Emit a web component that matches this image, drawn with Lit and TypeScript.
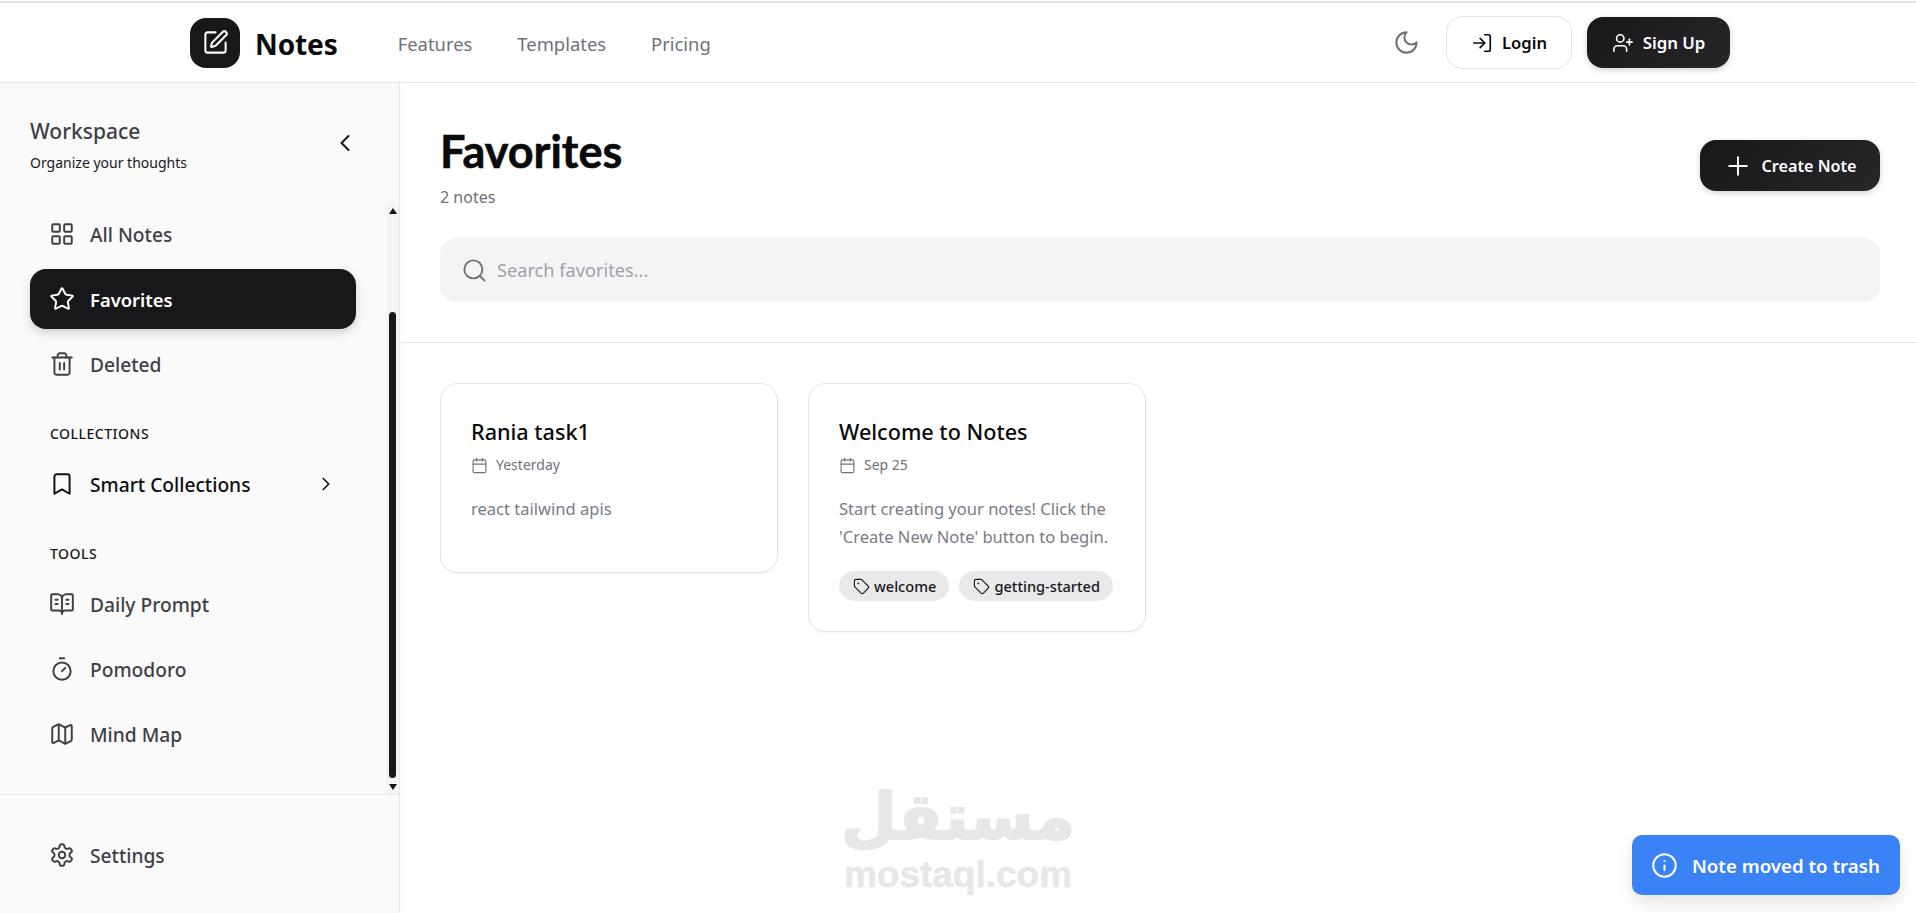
import { LitElement, html, css, svg } from "lit";
import { customElement } from "lit/decorators.js";

const I: Record<string, any> = {
  pen: svg`<path d="M12 3H5a2 2 0 0 0-2 2v14a2 2 0 0 0 2 2h14a2 2 0 0 0 2-2v-7"/><path d="M18.375 2.625a1 1 0 0 1 3 3l-9.013 9.014a2 2 0 0 1-.853.505l-2.873.84a.5.5 0 0 1-.62-.62l.84-2.873a2 2 0 0 1 .506-.852z"/>`,
  moon: svg`<path d="M12 3a6 6 0 0 0 9 9 9 9 0 1 1-9-9Z"/>`,
  login: svg`<path d="M15 3h4a2 2 0 0 1 2 2v14a2 2 0 0 1-2 2h-4"/><polyline points="10 17 15 12 10 7"/><line x1="15" y1="12" x2="3" y2="12"/>`,
  userplus: svg`<path d="M16 21v-2a4 4 0 0 0-4-4H6a4 4 0 0 0-4 4v2"/><circle cx="9" cy="7" r="4"/><line x1="19" y1="8" x2="19" y2="14"/><line x1="22" y1="11" x2="16" y2="11"/>`,
  plus: svg`<path d="M5 12h14"/><path d="M12 5v14"/>`,
  grid: svg`<rect x="3" y="3" width="7" height="7" rx="1"/><rect x="14" y="3" width="7" height="7" rx="1"/><rect x="14" y="14" width="7" height="7" rx="1"/><rect x="3" y="14" width="7" height="7" rx="1"/>`,
  star: svg`<path d="M11.525 2.295a.53.53 0 0 1 .95 0l2.31 4.679a2.123 2.123 0 0 0 1.595 1.16l5.166.756a.53.53 0 0 1 .294.904l-3.736 3.638a2.123 2.123 0 0 0-.611 1.878l.882 5.14a.53.53 0 0 1-.771.56l-4.618-2.428a2.122 2.122 0 0 0-1.973 0L6.396 21.01a.53.53 0 0 1-.77-.56l.881-5.139a2.122 2.122 0 0 0-.611-1.879L2.16 9.795a.53.53 0 0 1 .294-.906l5.165-.755a2.122 2.122 0 0 0 1.597-1.16z"/>`,
  trash: svg`<path d="M3 6h18"/><path d="M19 6v14c0 1-1 2-2 2H7c-1 0-2-1-2-2V6"/><path d="M8 6V4c0-1 1-2 2-2h4c1 0 2 1 2 2v2"/><line x1="10" y1="11" x2="10" y2="17"/><line x1="14" y1="11" x2="14" y2="17"/>`,
  bookmark: svg`<path d="m19 21-7-4-7 4V5a2 2 0 0 1 2-2h10a2 2 0 0 1 2 2v16z"/>`,
  right: svg`<path d="m9 18 6-6-6-6"/>`,
  left: svg`<path d="m15 18-6-6 6-6"/>`,
  book: svg`<path d="M12 7v14"/><path d="M16 12h2"/><path d="M16 8h2"/><path d="M3 18a1 1 0 0 1-1-1V4a1 1 0 0 1 1-1h5a4 4 0 0 1 4 4 4 4 0 0 1 4-4h5a1 1 0 0 1 1 1v13a1 1 0 0 1-1 1h-6a3 3 0 0 0-3 3 3 3 0 0 0-3-3z"/><path d="M6 12h2"/><path d="M6 8h2"/>`,
  timer: svg`<line x1="10" y1="2" x2="14" y2="2"/><line x1="12" y1="14" x2="15" y2="11"/><circle cx="12" cy="14" r="8"/>`,
  map: svg`<path d="M14.106 5.553a2 2 0 0 0 1.788 0l3.659-1.83A1 1 0 0 1 21 4.619v12.764a1 1 0 0 1-.553.894l-4.553 2.277a2 2 0 0 1-1.788 0l-4.212-2.106a2 2 0 0 0-1.788 0l-3.659 1.83A1 1 0 0 1 3 19.381V6.618a1 1 0 0 1 .553-.894l4.553-2.277a2 2 0 0 1 1.788 0z"/><path d="M15 5.764v15"/><path d="M9 3.236v15"/>`,
  gear: svg`<path d="M12.22 2h-.44a2 2 0 0 0-2 2v.18a2 2 0 0 1-1 1.73l-.43.25a2 2 0 0 1-2 0l-.15-.08a2 2 0 0 0-2.73.73l-.22.38a2 2 0 0 0 .73 2.73l.15.1a2 2 0 0 1 1 1.72v.51a2 2 0 0 1-1 1.74l-.15.09a2 2 0 0 0-.73 2.73l.22.38a2 2 0 0 0 2.73.73l.15-.08a2 2 0 0 1 2 0l.43.25a2 2 0 0 1 1 1.73V20a2 2 0 0 0 2 2h.44a2 2 0 0 0 2-2v-.18a2 2 0 0 1 1-1.73l.43-.25a2 2 0 0 1 2 0l.15.08a2 2 0 0 0 2.73-.73l.22-.39a2 2 0 0 0-.73-2.73l-.15-.08a2 2 0 0 1-1-1.74v-.5a2 2 0 0 1 1-1.74l.15-.09a2 2 0 0 0 .73-2.73l-.22-.38a2 2 0 0 0-2.73-.73l-.15.08a2 2 0 0 1-2 0l-.43-.25a2 2 0 0 1-1-1.73V4a2 2 0 0 0-2-2z"/><circle cx="12" cy="12" r="3"/>`,
  search: svg`<circle cx="11" cy="11" r="8"/><path d="m21 21-4.3-4.3"/>`,
  cal: svg`<path d="M8 2v4"/><path d="M16 2v4"/><rect x="3" y="4" width="18" height="18" rx="2"/><path d="M3 10h18"/>`,
  tag: svg`<path d="M12.586 2.586A2 2 0 0 0 11.172 2H4a2 2 0 0 0-2 2v7.172a2 2 0 0 0 .586 1.414l8.704 8.704a2.426 2.426 0 0 0 3.42 0l6.58-6.58a2.426 2.426 0 0 0 0-3.42z"/><circle cx="7.5" cy="7.5" r=".5" fill="currentColor"/>`,
  info: svg`<circle cx="12" cy="12" r="10"/><path d="M12 16v-4"/><path d="M12 8h.01"/>`,
};

const icon = (n: string, size = 26, sw = 1.8) => html`<svg class="ic" width=${size} height=${size} viewBox="0 0 24 24" fill="none" stroke="currentColor" stroke-width=${sw} stroke-linecap="round" stroke-linejoin="round">${I[n]}</svg>`;

@customElement("app-root")
export class AppRoot extends LitElement {
  static styles = css`
    :host { display: block; width: 1916px; height: 913px; overflow: hidden; position: relative; background: #fff; color: #0a0a0a; font-family: "Noto Sans", "Open Sans", sans-serif; }
    * { box-sizing: border-box; }
    .ic { flex: none; display: block; }
    .strip { height: 3px; border-top: 1px solid #fff; background: #e2e2e2; }
    header { height: 80px; border-bottom: 1px solid #e4e4e7; display: flex; align-items: center; padding: 0 186px 0 190px; }
    .logo { width: 50px; height: 50px; border-radius: 16px; background: #18181b; color: #fff; display: flex; align-items: center; justify-content: center; }
    .brand { font-size: 28px; font-weight: 700; margin-left: 15px; letter-spacing: -0.1px; padding-top: 2px; }
    nav.top { display: flex; gap: 45px; margin-left: 60px; font-size: 18.4px; color: #71717a; padding-top: 2px; }
    .spacer { flex: 1; }
    .moon { color: #71717a; margin-right: 26px; }
    .btn { display: flex; align-items: center; justify-content: center; font-weight: 600; }
    .login { width: 126px; height: 53px; border: 1px solid #e4e4e7; border-radius: 16px; gap: 9px; font-size: 16.6px; background: #fff; }
    .signup { width: 143px; height: 51px; border-radius: 16px; gap: 9px; font-size: 16.8px; color: #fff; background: linear-gradient(135deg, #18181b, #27272a); margin-left: 15px; box-shadow: 0 2px 6px rgba(0,0,0,.18); }
    .body { display: flex; height: 830px; }
    aside { width: 400px; flex: none; background: #fafafa; border-right: 1px solid #e8e8eb; display: flex; flex-direction: column; box-shadow: 2px 0 8px rgba(0,0,0,.02); }
    .ws { height: 120px; padding: 33px 30px 0; display: flex; justify-content: space-between; flex: none; }
    .ws h2 { margin: 0; font-size: 21px; font-weight: 500; color: #3f3f46; line-height: 30px; }
    .ws p { margin: 7px 0 0; font-size: 14px; line-height: 20px; color: #18181b; }
    .ws .collapse { color: #18181b; margin: 13px 10px 0 0; }
    .scrollwrap { height: 592px; flex: none; display: flex; border-bottom: 1px solid #e8e8eb; }
    .list { flex: 1; padding: 0 0 0 30px; }
    .item { width: 326px; height: 60px; border-radius: 16px; display: flex; align-items: center; padding: 0 0 0 19px; gap: 15px; font-size: 19.2px; font-weight: 500; color: #3f3f46; margin-bottom: 5px; }
    .item.on { background: #18181b; color: #fff; box-shadow: 0 4px 10px rgba(0,0,0,.16); font-weight: 600; font-size: 18.4px; }
    .item.dark { color: #0f0f10; }
    .item .chev { margin-left: auto; margin-right: 19px; }
    .first { margin-top: 1px; }
    .label { font-size: 14px; font-weight: 500; letter-spacing: .5px; color: #18181b; padding-left: 20px; line-height: 20px; }
    .l1 { margin-top: 30px; margin-bottom: 10px; }
    .l2 { margin-top: 30px; margin-bottom: 10px; }
    .track { width: 13px; flex: none; background: #f4f4f5; display: flex; flex-direction: column; align-items: center; }
    .tri-u, .tri-d { width: 0; height: 0; border-left: 4px solid transparent; border-right: 4px solid transparent; flex: none; }
    .tri-u { border-bottom: 6px solid #111; margin-top: 5px; }
    .tri-d { border-top: 6px solid #111; margin-bottom: 4px; }
    .thumb { width: 7px; height: 466px; background: #18181b; border-radius: 4px; margin-top: 98px; margin-bottom: auto; }
    .foot { padding: 30px 0 0 30px; }
    main { flex: 1; display: flex; flex-direction: column; min-width: 0; }
    .mhead { height: 260px; border-bottom: 1px solid #e8e8eb; padding: 0 36px 0 40px; flex: none; }
    .titlerow { display: flex; justify-content: space-between; height: 155px; }
    h1 { margin: 0; font-family: "Lato", "Noto Sans", sans-serif; font-size: 45px; font-weight: 700; line-height: 60px; padding-top: 38px; height: 100px; -webkit-text-stroke: 0.6px #0a0a0a; }
    .count { font-size: 16px; color: #71717a; line-height: 22px; margin-top: 3px; }
    .create { width: 180px; height: 51px; border-radius: 16px; gap: 8px; font-size: 16.2px; color: #fff; background: linear-gradient(135deg, #18181b, #27272a); margin-top: 57px; box-shadow: 0 2px 6px rgba(0,0,0,.18); }
    .search { height: 64px; border-radius: 16px; background: #f4f4f5; display: flex; align-items: center; padding-left: 21px; gap: 9px; color: #71717a; font-size: 18.2px; }
    .search span { color: #a1a1aa; }
    .cards { display: flex; align-items: flex-start; gap: 30px; padding: 40px 0 0 40px; }
    .card { width: 338px; border: 1px solid #e4e4e7; border-radius: 18px; padding: 32px 30px 0; background: #fff; box-shadow: 0 1px 3px rgba(0,0,0,.05); }
    .c1 { height: 190px; }
    .c2 { height: 249px; }
    .card h3 { margin: 0; font-size: 21.6px; font-weight: 500; line-height: 32px; color: #0a0a0a; }
    .meta { display: flex; align-items: center; gap: 8px; font-size: 14px; color: #71717a; margin-top: 5px; line-height: 24px; }
    .desc { font-size: 16.55px; line-height: 28px; color: #7b7b84; margin-top: 18px; }
    .tags { display: flex; gap: 10px; margin-top: 20px; }
    .tag { height: 30px; border-radius: 15px; background: #e9e9ea; display: flex; align-items: center; gap: 4px; padding: 0 13px 0 14px; font-size: 14.6px; font-weight: 500; color: #18181b; }
    .toast { position: absolute; left: 1632px; top: 835px; width: 268px; height: 60px; border-radius: 10px; background: #3b82f6; color: #fff; display: flex; align-items: center; padding-left: 19px; gap: 14px; font-size: 18.7px; font-weight: 600; box-shadow: 0 8px 16px rgba(0,0,0,.1); }
    .wm { position: absolute; left: 843px; top: 772px; width: 230px; color: #e7e7e7; text-align: center; pointer-events: none; }
    .wm .ar { font-family: "DejaVu Sans", sans-serif; font-size: 64px; font-weight: 700; line-height: 90px; height: 86px; display: flex; justify-content: center; white-space: nowrap; -webkit-text-stroke: 2px #e7e7e7; }
    .wm .en { font-family: "Liberation Sans", sans-serif; font-size: 37px; font-weight: 700; line-height: 34px; white-space: nowrap; display: flex; justify-content: center; -webkit-text-stroke: 0.5px #e7e7e7; }
  `;

  render() {
    const item = (ic: string, t: string, cls = "") => html`<div class="item ${cls}">${icon(ic)}<span>${t}</span></div>`;
    return html`
      <div class="strip"></div>
      <header>
        <div class="logo">${icon("pen", 27)}</div>
        <div class="brand">Notes</div>
        <nav class="top"><span>Features</span><span>Templates</span><span>Pricing</span></nav>
        <div class="spacer"></div>
        <div class="moon">${icon("moon", 27)}</div>
        <div class="btn login">${icon("login", 22)}<span>Login</span></div>
        <div class="btn signup">${icon("userplus", 22)}<span>Sign Up</span></div>
      </header>
      <div class="body">
        <aside>
          <div class="ws">
            <div><h2>Workspace</h2><p>Organize your thoughts</p></div>
            <div class="collapse">${icon("left", 28)}</div>
          </div>
          <div class="scrollwrap">
            <div class="list">
              <div class="first"></div>
              ${item("grid", "All Notes")}
              ${item("star", "Favorites", "on")}
              ${item("trash", "Deleted")}
              <div class="label l1">COLLECTIONS</div>
              <div class="item dark">${icon("bookmark")}<span>Smart Collections</span><span class="chev">${icon("right", 22)}</span></div>
              <div class="label l2">TOOLS</div>
              ${item("book", "Daily Prompt")}
              ${item("timer", "Pomodoro")}
              ${item("map", "Mind Map")}
            </div>
            <div class="track"><div class="tri-u"></div><div class="thumb"></div><div class="tri-d"></div></div>
          </div>
          <div class="foot">${item("gear", "Settings")}</div>
        </aside>
        <main>
          <div class="mhead">
            <div class="titlerow">
              <div><h1>Favorites</h1><div class="count">2 notes</div></div>
              <div class="btn create">${icon("plus", 30, 1.6)}<span>Create Note</span></div>
            </div>
            <div class="search">${icon("search", 27, 1.7)}<span>Search favorites...</span></div>
          </div>
          <div class="cards">
            <div class="card c1">
              <h3>Rania task1</h3>
              <div class="meta">${icon("cal", 17, 1.6)}<span>Yesterday</span></div>
              <div class="desc">react tailwind apis</div>
            </div>
            <div class="card c2">
              <h3>Welcome to Notes</h3>
              <div class="meta">${icon("cal", 17, 1.6)}<span>Sep 25</span></div>
              <div class="desc">Start creating your notes! Click the<br />'Create New Note' button to begin.</div>
              <div class="tags">
                <div class="tag">${icon("tag", 17, 1.6)}<span>welcome</span></div>
                <div class="tag">${icon("tag", 17, 1.6)}<span>getting-started</span></div>
              </div>
            </div>
          </div>
        </main>
      </div>
      <div class="wm"><div class="ar" dir="rtl">مستقل</div><div class="en">mostaql.com</div></div>
      <div class="toast">${icon("info", 27)}<span>Note moved to trash</span></div>
    `;
  }
}
